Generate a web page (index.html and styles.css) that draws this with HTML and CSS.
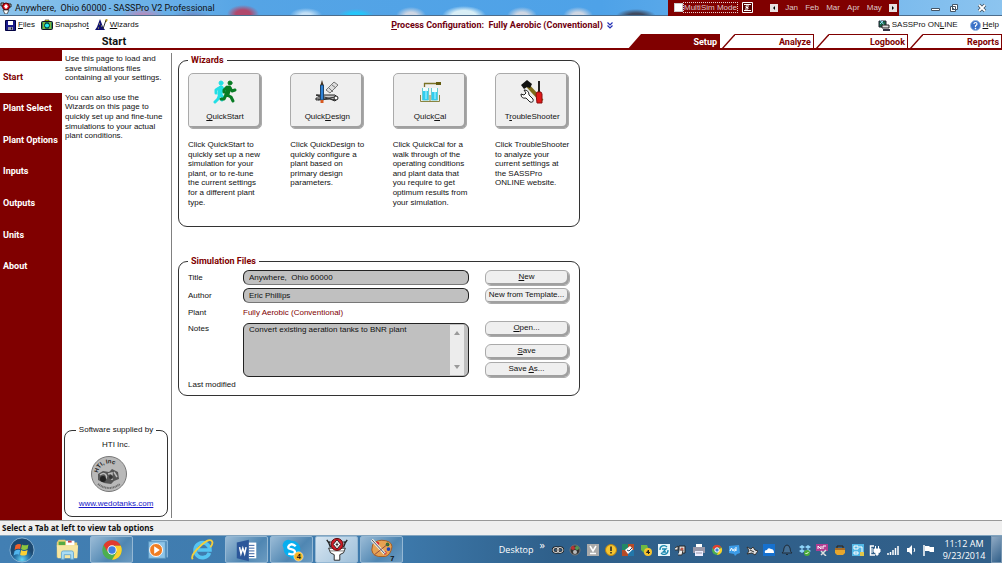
FILE: index.html
```
<!DOCTYPE html>
<html lang="en">
<head>
<meta charset="utf-8">
<title>Anywhere, Ohio 60000 - SASSPro V2 Professional</title>
<link rel="stylesheet" href="styles.css">
</head>
<body>
<div class="desktop">
  <header class="titlebar">
    <svg class="app-icon" viewBox="0 0 12 12"><path d="M1 1h3v3H1zM8 2h3v3H8z" fill="#ccc" stroke="#222"/><circle cx="6" cy="4.500" r="3.500" fill="#e01020" stroke="#500"/><path d="M6 2l2 2.500L6 7 4 4.500z" fill="#fff"/><path d="M3 8h6l-2 4H5z" fill="#fff" stroke="#222" stroke-width=".7"/></svg>
    <h1 class="window-title">Anywhere,&nbsp; Ohio 60000 - SASSPro V2 Professional</h1>
    <div class="multisim">
      <label class="multisim-label"><input type="checkbox" class="multisim-check"><span class="dotted">MultiSim Mode</span></label>
      <button class="plain sheet" aria-label="Simulation list"><svg width="11" height="11" viewBox="0 0 11 11"><path d="M.5.500h10v10H.5z" fill="#500" stroke="#fff"/><path d="M2 2.500h7M2 8.500h7" stroke="#fff"/><path d="M7 4H4v1.500h2V7H3" fill="none" stroke="#fff"/></svg></button>
      <div class="months">
        <button class="step" aria-label="Previous month"><svg viewBox="0 0 8 8"><path d="M5 2L3 4l2 2z"/></svg></button>
        <button class="plain month">Jan</button><button class="plain month">Feb</button><button class="plain month">Mar</button><button class="plain month">Apr</button><button class="plain month">May</button>
        <button class="step" aria-label="Next month"><svg viewBox="0 0 8 8"><path d="M3 2l2 2-2 2z"/></svg></button>
      </div>
    </div>
    <div class="window-controls">
      <button class="plain wc" aria-label="Minimize"><svg viewBox="0 0 12 12"><path d="M2.500 6.500h8v2h-8z" fill="#fff" stroke="#456"/></svg></button>
      <button class="plain wc" aria-label="Restore"><svg viewBox="0 0 12 12"><path d="M4.500 2.500h5v5h-5zM2.500 4.500h5v5h-5z" fill="#fff" stroke="#456"/><path d="M4.500 6.500h1v1h-1z" stroke="#456"/></svg></button>
      <button class="plain wc close" aria-label="Close"><svg viewBox="0 0 12 12"><path d="M3 3l6 6M9 3l-6 6" stroke="#456" stroke-width="3.500"/><path d="M3 3l6 6M9 3l-6 6" stroke="#fff" stroke-width="1.800"/></svg></button>
    </div>
  </header>

  <div class="toolbar">
    <div class="tools">
      <button class="plain tool"><svg class="i11" viewBox="0 0 11 11"><path d="M.5.500h10v10h-10z" fill="#1a1a8c" stroke="#000040"/><path d="M3 1h5v4H3z" fill="#fff"/><path d="M3 7h5v3H3z" fill="#99a"/><path d="M6 7.500h1v2H6z" fill="#113"/></svg><span><u>F</u>iles</span></button>
      <button class="plain tool"><svg class="i12" viewBox="0 0 12 12"><path d="M4 1h4v2H4z" fill="#dd0" stroke="#222" stroke-width=".6"/><rect x=".5" y="2.500" width="11" height="8" rx="1" fill="#2a8a55" stroke="#112"/><path d="M3 3v7M9 3v7" stroke="#dd2"/><circle cx="6" cy="6.500" r="2.500" fill="#2ee" stroke="#033"/></svg><span>Snapsho<u>t</u></span></button>
      <button class="plain tool"><svg class="i13" viewBox="0 0 13 12"><path d="M5 0l3 8 2 3H0l2-3z" fill="#101070"/><path d="M4 5h1M6 7h1M3 9h1" stroke="#cc4"/><path d="M8 10l3-9" stroke="#333"/><path d="M10 1h3M11.500 0v3" stroke="#a80" stroke-width=".7"/></svg><span><u>W</u>izards</span></button>
    </div>
    <button class="plain process"><span><u>P</u>rocess Configuration:&nbsp; Fully Aerobic (Conventional)</span><svg width="6" height="7" viewBox="0 0 6 7"><path d="M.5.500L3 3 5.500.500M.5 3.500L3 6l2.500-2.500" fill="none" stroke="#2330b5" stroke-width="1.200"/></svg></button>
    <div class="tools tools-right">
      <a class="tool" href="#online"><svg class="i12" viewBox="0 0 12 12"><path d="M1 2h7v6H1z" fill="#176b46" stroke="#223"/><path d="M2 1l4 5M5 2l-3 3" stroke="#9df"/><path d="M4 6h7v3H4z" fill="#ddd" stroke="#222"/><path d="M5 11h7" stroke="#334" stroke-width="2"/></svg><span>SASSPro ON<u>L</u>INE</span></a>
      <button class="plain tool"><svg class="i11" viewBox="0 0 11 11"><circle cx="5.500" cy="5.500" r="5" fill="#3b72c8" stroke="#9ab8e0"/><path d="M4 4q0-1.500 1.500-1.500T7 4q0 .8-1.500 1.800V7" fill="none" stroke="#fff" stroke-width="1.200"/><circle cx="5.500" cy="8.600" r=".8" fill="#fff"/></svg><span><u>H</u>elp</span></button>
    </div>
  </div>

  <nav class="tabrow" aria-label="Sections">
    <h2 class="page-title">Start</h2>
    <div class="tabs">
      <button class="plain tab active"><svg class="slant" viewBox="0 0 14 16"><path d="M0 16L14 0v16z" fill="#800000"/></svg><span class="tab-label">Setup</span></button>
      <button class="plain tab"><svg class="slant" viewBox="0 0 14 16"><path d="M0 16L14 .5" fill="none" stroke="#800000" stroke-width="1.500"/></svg><span class="tab-label">Analyze</span></button>
      <button class="plain tab"><svg class="slant" viewBox="0 0 14 16"><path d="M0 16L14 .5" fill="none" stroke="#800000" stroke-width="1.500"/></svg><span class="tab-label">Logbook</span></button>
      <button class="plain tab"><svg class="slant" viewBox="0 0 14 16"><path d="M0 16L14 .5" fill="none" stroke="#800000" stroke-width="1.500"/></svg><span class="tab-label">Reports</span></button>
    </div>
  </nav>

  <div class="body">
    <nav class="sidebar" aria-label="Setup pages">
      <div class="side-list">
        <button class="plain side active">Start</button>
        <button class="plain side">Plant Select</button>
        <button class="plain side">Plant Options</button>
        <button class="plain side">Inputs</button>
        <button class="plain side">Outputs</button>
        <button class="plain side">Units</button>
        <button class="plain side">About</button>
      </div>
    </nav>

    <aside class="info">
      <div class="help">
        <p>Use this page to load and<br>save simulations files<br>containing all your settings.</p>
        <p>You can also use the<br>Wizards on this page to<br>quickly set up and fine-tune<br>simulations to your actual<br>plant conditions.</p>
      </div>
      <fieldset class="supplier">
        <legend>Software supplied by</legend>
        <p>HTI Inc.</p>
        <svg class="hti" viewBox="0 0 38 38"><circle cx="19" cy="19" r="17.500" fill="#b9b9b9" stroke="#777"/><path id="arc" d="M8 18a11.500 11.500 0 0 1 22.500-1" fill="none"/><text class="hti-text"><textPath href="#arc">HTI, Inc</textPath></text><path d="M8 19l5-3 6 1 3-3 6 3 1 7-5 2-3 3-7-1-6-3z" fill="#555"/><path d="M10 20q4-3 6 0t-3 5M18 19l4-1v7M24 17l3 5" fill="none" stroke="#bbb" stroke-width="1.500"/><circle cx="13" cy="24" r="3" fill="#222"/><circle cx="21" cy="22" r="2" fill="#333"/><path d="M8 29q11 8 22 0" fill="none" stroke="#666" stroke-dasharray="1 .6" stroke-width="2"/></svg>
        <a class="link" href="#wedotanks">www.wedotanks.com</a>
      </fieldset>
    </aside>

    <main class="main">
      <fieldset class="group wizards">
        <legend>Wizards</legend>
        <div class="wizard-grid">
          <section class="wizard">
            <button class="raised big"><svg viewBox="0 0 24 24"><g stroke-linecap="round" stroke-linejoin="round" fill="none"><g stroke="#22dfe5"><circle cx="8" cy="3" r="2" fill="#22dfe5"/><path d="M8 8l-1 6" stroke-width="5"/><path d="M8 7l4 4M6 8l-3 2v3M7 14l3 3-1 3M7 14l-2 5-3 3" stroke-width="3"/></g><g stroke="#087c24"><circle cx="17" cy="3" r="2" fill="#087c24"/><path d="M16 8l-2 6" stroke-width="5"/><path d="M17 8l2 3 3-1M14 7l-3 3v2M14 15l4 2 2 4M13 15l-2 4H8" stroke-width="3"/></g></g></svg><span><u>Q</u>uickStart</span></button>
            <p>Click QuickStart to<br>quickly set up a new<br>simulation for your<br>plant, or to re-tune<br>the current settings<br>for a different plant<br>type.</p>
          </section>
          <section class="wizard">
            <button class="raised big"><svg viewBox="0 0 24 24"><path d="M11 10L19 2l4 3-8 8z" fill="#ddd" stroke="#777"/><path d="M14 8l4 4M17 5l4 3" stroke="#777"/><path d="M1 15h19l3 3-3 3-5-2-14 1v-2h6z" fill="#ccc" stroke="#222"/><path d="M2 15l18 5M3 20l17-3" stroke="#333"/><circle cx="21" cy="18" r="2" fill="#fff" stroke="#222"/><path d="M5.500 5h3v15h-3z" fill="#2f83d8" stroke="#246"/><path d="M5.500 5L7 0l1.500 5z" fill="#432"/><path d="M5.500 20h3v3h-3z" fill="#d85a20"/></svg><span>Quick<u>D</u>esign</span></button>
            <p>Click QuickDesign to<br>quickly configure a<br>plant based on<br>primary design<br>parameters.</p>
          </section>
          <section class="wizard">
            <button class="raised big"><svg viewBox="0 0 24 24"><path d="M6 3.500h13M6.500 3v4" stroke="#7a7226" stroke-width="1.300"/><path d="M18 2h5v3h-5z" fill="#645c10"/><path d="M4.500 8v12h6V8M13.500 8v12h6V8" fill="#eff" stroke="#6cc"/><path d="M5 11h5v9H5zM14 12h5v8h-5z" fill="#30cdf0"/><path d="M2.500 15v6.500h19V15M12 15v6" fill="none" stroke="#8a8440"/><path d="M8 10v9M17 12v7" stroke="#b8f6ff"/></svg><span>Quick<u>C</u>al</span></button>
            <p>Click QuickCal for a<br>walk through of the<br>operating conditions<br>and plant data that<br>you require to get<br>optimum results from<br>your simulation.</p>
          </section>
          <section class="wizard">
            <button class="raised big"><svg viewBox="0 0 24 24"><path d="M8 6l14 15" stroke="#7d6a18" stroke-width="4"/><path d="M1 5l6-5 5 4-2 4-3-1-3 2z" fill="#111"/><path d="M19 1v11" stroke="#222" stroke-width="2"/><path d="M16 14l1-2h4l1 2v9h-5z" fill="#e01818" stroke="#811"/><path d="M1 14l3 1 2-2-2-3q5 0 5 5l4 4q1 4-3 3l-4-4q-5 1-5-4z" fill="#fff" stroke="#222"/></svg><span>T<u>r</u>oubleShooter</span></button>
            <p>Click TroubleShooter<br>to analyze your<br>current settings at<br>the SASSPro<br>ONLINE website.</p>
          </section>
        </div>
      </fieldset>

      <fieldset class="group files">
        <legend>Simulation Files</legend>
        <div class="files-layout">
          <div class="form">
            <label for="title">Title</label>
            <input id="title" class="field" value="Anywhere,  Ohio 60000">
            <label for="author">Author</label>
            <input id="author" class="field" value="Eric Phillips">
            <span>Plant</span>
            <span class="plant">Fully Aerobic (Conventional)</span>
            <label for="notes" class="notes-label">Notes</label>
            <div class="notes">
              <textarea id="notes">Convert existing aeration tanks to BNR plant</textarea>
              <div class="scroll"><svg viewBox="0 0 6 4"><path d="M0 4l3-4 3 4z"/></svg><svg viewBox="0 0 6 4"><path d="M0 0l3 4 3-4z"/></svg></div>
            </div>
            <span class="modified">Last modified</span>
          </div>
          <div class="actions">
            <button class="raised small"><span><u>N</u>ew</span></button>
            <button class="raised small">New from Template...</button>
            <button class="raised small open"><span><u>O</u>pen...</span></button>
            <button class="raised small save"><span><u>S</u>ave</span></button>
            <button class="raised small"><span>Save <u>A</u>s...</span></button>
          </div>
        </div>
      </fieldset>
    </main>
  </div>

  <div class="status">Select a Tab at left to view tab options</div>

  <footer class="taskbar">
    <div class="apps">
      <button class="plain app" aria-label="Start menu"><svg viewBox="0 0 28 28"><defs><radialGradient id="orb" cx=".5" cy=".9"><stop offset="0" stop-color="#65d5f5"/><stop offset=".6" stop-color="#2773a8"/><stop offset="1" stop-color="#1c4870"/></radialGradient></defs><circle cx="14" cy="14" r="13" fill="url(#orb)" stroke="#8ab6d5"/><path d="M7 9q3-2 6-1l-1 5q-3-1-6 1z" fill="#f0602a"/><path d="M14 8q3 2 7 0l-1 5q-4 2-7 0z" fill="#8cc63e"/><path d="M6 15q3-2 6-1l-1 5q-3-1-6 1z" fill="#52b4ec"/><path d="M13 14q3 2 7 0l-1 5q-4 2-7 0z" fill="#fbd034"/></svg></button>
      <button class="plain app" aria-label="File Explorer"><svg viewBox="0 0 28 28"><path d="M3 6l2-3h7l2 3h11v16H3z" fill="#e9cf76"/><path d="M5 5h7v4H5z" fill="#5a4"/><path d="M13 4h9v5h-9z" fill="#fff"/><path d="M15 4h4v2h-4z" fill="#c44"/><path d="M3 9h23l-1 14H4z" fill="#f6e6a2"/><path d="M8 24v-7q0-2 2-2h9q2 0 2 2v7h-3v-5h-7v5z" fill="#a9dcf4" stroke="#68a9cf"/></svg></button>
      <button class="plain app framed" aria-label="Chrome"><svg viewBox="0 0 28 28"><circle cx="14" cy="14" r="10.500" fill="#4caf50"/><path d="M5 8.500a10.500 10.500 0 0 1 18.500 1H14l-5 6z" fill="#e23b2e"/><path d="M23.500 9.500A10.500 10.500 0 0 1 14 24.500l5-8-2-7z" fill="#fbd02d"/><circle cx="14" cy="14" r="5" fill="#fff"/><circle cx="14" cy="14" r="4" fill="#3f7fe0"/></svg></button>
      <button class="plain app" aria-label="Media Player"><svg viewBox="0 0 28 28"><path d="M5 5h18v18H5z" fill="#8cc4e8" stroke="#5794be"/><path d="M8 4h17v18" fill="none" stroke="#a8d3ee"/><circle cx="13" cy="14" r="7" fill="#ef7d23" stroke="#fff"/><path d="M11 10l6 4-6 4z" fill="#fff"/></svg></button>
      <button class="plain app" aria-label="Internet Explorer"><svg viewBox="0 0 28 28"><path d="M22 17a8 8 0 1 1 .5-3H9" fill="none" stroke="#55c5f3" stroke-width="4"/><path d="M4 24Q1 20 12 10T25 5q1 2-2 6" fill="none" stroke="#f5cf3b" stroke-width="2"/></svg></button>
      <button class="plain app framed" aria-label="Word"><svg viewBox="0 0 28 28"><path d="M13 6h11v17H13z" fill="#fff"/><path d="M16 9h6M16 12h6M16 15h6M16 18h6M16 21h6" stroke="#2b579a"/><path d="M3 6l13-3v23L3 23z" fill="#2b579a"/><path d="M6 11l1.500 7L9.500 12l2 6L13 11" fill="none" stroke="#fff" stroke-width="1.600"/></svg></button>
      <button class="plain app framed" aria-label="Skype"><svg viewBox="0 0 28 28"><circle cx="10" cy="9" r="6" fill="#08aeef"/><circle cx="17" cy="18" r="6" fill="#08aeef"/><circle cx="14" cy="13" r="9" fill="#08aeef"/><path d="M18 10q-4-4-7-1t2 4 4 4-7 1" fill="none" stroke="#fff" stroke-width="2.500"/><circle cx="21" cy="21" r="5" fill="#f5b82c" stroke="#fff" stroke-width=".5"/><text x="19" y="24" class="badge">4</text></svg></button>
      <button class="plain app framed bright" aria-label="SASSPro"><svg viewBox="0 0 28 28"><path d="M5 12h18l-2 5-4 2v6h-6v-6l-4-2z" fill="#fff" stroke="#222"/><path d="M6 15h16" stroke="#777"/><circle cx="14" cy="8" r="6.500" fill="#d21b27" stroke="#500"/><path d="M14 3l4 5-4 5-4-5z" fill="#fff" stroke="#222"/><path d="M14 6v4M12.500 8h3" stroke="#222"/><path d="M3 3l2 3 2-1M5 6l2 5M25 3l-2 3-2-1M23 6l-2 5" fill="none" stroke="#222" stroke-width="1.500"/></svg></button>
      <button class="plain app framed" aria-label="Paint"><svg viewBox="0 0 28 28"><path d="M4 8q5-6 14-4t6 10-9 7Q4 22 3 14z" fill="#e6a253" stroke="#a55a20"/><circle cx="9" cy="7" r="2" fill="#d23"/><circle cx="20" cy="8" r="2" fill="#273"/><circle cx="21" cy="13" r="2" fill="#24b"/><circle cx="17" cy="17" r="2" fill="#d33"/><path d="M3 3l14 15" stroke="#eed" stroke-width="3"/><path d="M3 3l14 15" stroke="#446"/><path d="M6 19l15-12" stroke="#844"/><text x="23" y="26" class="badge">7</text></svg></button>
    </div>
    <div class="desk"><span>Desktop</span><span class="chev">»</span></div>
    <div class="tray">
      <svg viewBox="0 0 12 12"><ellipse cx="4" cy="6" rx="3" ry="2.500" fill="none" stroke="#222" stroke-width="2.500"/><ellipse cx="8" cy="6" rx="3" ry="2.500" fill="none" stroke="#222" stroke-width="2.500"/><ellipse cx="4" cy="6" rx="3" ry="2.500" fill="none" stroke="#ddd"/><ellipse cx="8" cy="6" rx="3" ry="2.500" fill="none" stroke="#ddd"/></svg>
      <svg viewBox="0 0 12 12"><circle cx="6" cy="6" r="5" fill="#333" stroke="#777"/><circle cx="4" cy="4" r="2" fill="#b33"/><circle cx="8" cy="4" r="2" fill="#595"/><circle cx="6" cy="8" r="2" fill="#bbb"/></svg>
      <svg viewBox="0 0 12 12"><path d="M0 0h12v12H0z" fill="#aaa"/><path d="M3 2l3 5 3-5M3 9.500h6" fill="none" stroke="#fff" stroke-width="1.500"/></svg>
      <svg viewBox="0 0 12 12"><circle cx="6" cy="6" r="5.500" fill="#f6c52f" stroke="#b98213"/><path d="M6 2.500v4.500M6 8v1.500" stroke="#222" stroke-width="1.500"/></svg>
      <svg viewBox="0 0 12 12"><path d="M0 0h12v12H0z" fill="#b54b27"/><path d="M0 0h6v6H0z" fill="#286"/><path d="M6 6h6v6H6z" fill="#27a"/><path d="M3 6l5-4 3 3-5 5z" fill="#fff"/><path d="M5 6l2 1 3-3" fill="none" stroke="#246"/></svg>
      <svg viewBox="0 0 12 12"><path d="M1 1h6l2 5-4 4-4-4z" fill="#6eb943"/><circle cx="8" cy="8" r="4" fill="#f7c42e"/><path d="M8.500 10V6L6.500 8.500H10" fill="none" stroke="#222"/></svg>
      <svg viewBox="0 0 12 12"><path d="M0 0h12v12H0z" fill="#e8f6fb"/><path d="M2 6a4 4 0 0 1 7-3M10 6a4 4 0 0 1-7 3M4 5h4L5 8h3" fill="none" stroke="#1887ae" stroke-width="1.300"/></svg>
      <svg viewBox="0 0 12 12"><path d="M4 2h6v7H4z" fill="#ddd" stroke="#222"/><path d="M0 4l3-2v4H0M5 6h3l-1 5H3" fill="#eee" stroke="#333"/><circle cx="7" cy="5" r="1.500" fill="#b54"/></svg>
      <svg viewBox="0 0 12 12"><path d="M3 0h6v4H3z" fill="#fff"/><path d="M0 3h12v6H0z" fill="#99a"/><path d="M2 7h8v5H2z" fill="#eef"/><path d="M3 9h6" stroke="#99a"/></svg>
      <svg viewBox="0 0 12 12"><circle cx="6" cy="6" r="5" fill="#4caf50"/><path d="M1.500 3.500a5 5 0 0 1 9 0H6L4 7z" fill="#e23b2e"/><path d="M10.500 3.500A5 5 0 0 1 6 11l2-5z" fill="#fbd02d"/><circle cx="6" cy="6" r="2.200" fill="#3f7fe0" stroke="#fff"/></svg>
      <svg viewBox="0 0 12 12"><path d="M1 2l10-1 1 8-3 1-2 2-1-2-5-1z" fill="#3c9ce8"/><path d="M2 7l1.500-3L5 7M8 3v4" fill="none" stroke="#fff"/><circle cx="6.500" cy="6" r="1" fill="none" stroke="#fff"/></svg>
      <svg viewBox="0 0 12 12"><path d="M1 3l4 2 2-2 2 3 3 1-3 4-3-2-5 1 2-3z" fill="#ddd" stroke="#333"/><path d="M4 6l4 2" stroke="#333"/></svg>
      <svg viewBox="0 0 12 12"><path d="M0 0h12v12H0z" fill="#1671cf"/><path d="M2 9q-1-3 2-3 1-3 4-1 3 0 3 4z" fill="#fff"/></svg>
      <svg viewBox="0 0 12 12"><path d="M1 9q2-1 2-5 1-3 3-3t3 3q0 4 2 5zM5 10.500h2" fill="#456f94" stroke="#202c38"/></svg>
      <svg viewBox="0 0 12 12"><path d="M3 1l3 2-3 2-3-2zM9 1l3 2-3 2-3-2zM3 5l3 2-3 2-3-2zM9 5l3 2-3 2-3-2z" fill="#8fd4fa"/><circle cx="8" cy="9" r="3" fill="#4bac38"/><path d="M6.500 9l1 1 2-2" fill="none" stroke="#fff"/></svg>
      <svg viewBox="0 0 12 12"><path d="M0 0h12v7H0z" fill="#b13d91"/><path d="M2 5V2l3 3V2M7 5V2h3" fill="none" stroke="#fff"/><path d="M5 7l5 5M10 6l-5 5" stroke="#ddd" stroke-width="1.500"/></svg>
      <svg viewBox="0 0 12 12"><path d="M1 4h10v5l-2 2H3l-2-2z" fill="#e6a62d"/><path d="M3 4V2h6v2" fill="none" stroke="#321"/><path d="M1 5h10" stroke="#632"/></svg>
      <svg viewBox="0 0 12 12"><path d="M0 0h12v12H0z" fill="#52b7e5"/><path d="M2 2h4v3H2zM7 3h3v5M2 8h4v2H2z" fill="none" stroke="#fff"/><path d="M8 8h4v4H8z" fill="#e3c84b"/></svg>
      <svg viewBox="0 0 12 12"><path d="M5 2H1.500v9H6" fill="none" stroke="#fff" stroke-width="1.500"/><path d="M3 4v5" stroke="#fff"/><path d="M5 5h6v3L9 9v2H7V9L5 8zM6.500 2v3M9.500 2v3" fill="#fff" stroke="#fff"/></svg>
      <svg viewBox="0 0 12 12"><path d="M1 11V9M3.500 11V8M6 11V6M8.500 11V4M11 11V2" stroke="#fff" stroke-width="1.500"/></svg>
      <svg viewBox="0 0 12 12"><path d="M2 4h2l3-3v10L4 8H2z" fill="#fff"/><path d="M9 4q1.500 2 0 4" fill="none" stroke="#fff"/></svg>
      <svg viewBox="0 0 12 12"><path d="M2 1v11" stroke="#fff" stroke-width="1.500"/><path d="M3 2h4l1 1h4v5H8L7 7H3z" fill="#fff"/></svg>
    </div>
    <div class="clock"><span>11:12 AM</span><span>9/23/2014</span></div>
    <button class="plain show-desktop" aria-label="Show desktop"></button>
  </footer>
</div>
</body>
</html>
```
FILE: styles.css
```
* { box-sizing: border-box; }
body { margin: 0; background: #fff; color: #111; font: 8px/1.2 "Liberation Sans", Arial, sans-serif; }
p, h1, h2 { margin: 0; font-size: inherit; }
svg { display: block; flex: none; }
.plain { border: 0; padding: 0; margin: 0; background: none; color: inherit; font: inherit; }
.desktop { display: flex; flex-direction: column; min-height: 100vh; }

/* Title bar */
.titlebar {
  display: flex; align-items: center; height: 16px; border-bottom: 1px solid #4d6d8c;
  background:
    radial-gradient(ellipse 22px 7px at 143px 15px, #b08fc0 20%, transparent),
    radial-gradient(ellipse 20px 6px at 90px 16px, #8a9fd8 20%, transparent),
    radial-gradient(ellipse 20px 6px at 192px 16px, #6a8cc8 20%, transparent),
    radial-gradient(ellipse 16px 9px at 243px 14px, #b0486c 45%, transparent),
    radial-gradient(ellipse 16px 7px at 306px 15px, #c4e0f6 30%, transparent),
    radial-gradient(ellipse 18px 6px at 356px 15px, #25c6fa 40%, transparent),
    radial-gradient(ellipse 15px 9px at 411px 16px, #cfd6e2 40%, transparent),
    radial-gradient(ellipse 22px 10px at 464px 16px, #d8eef6 55%, transparent),
    radial-gradient(ellipse 15px 9px at 522px 16px, #cfd6e2 40%, transparent),
    radial-gradient(ellipse 15px 9px at 578px 16px, #cfd6e2 40%, transparent),
    radial-gradient(ellipse 20px 7px at 636px 16px, #404a60 40%, transparent),
    linear-gradient(90deg, #8cc4ec, #55a4e5 25%, #4ea2e8 60%, #8cc4ef);
}
.app-icon { width: 12px; height: 12px; }
.window-title { margin-left: 3px; flex: 1; font: 9px/14px Roboto, sans-serif; white-space: nowrap; }
.multisim { display: flex; align-items: center; justify-content: space-between; width: 231px; height: 16px; padding: 0 2px 0 6px; background: #800000; color: #ddc8c8; }
.multisim-label { display: flex; align-items: center; font-size: 8px; }
.multisim-check { appearance: none; width: 9px; height: 9px; margin: 0; background: #fff; border: 1px solid #ccc; }
.dotted { border: 1px dotted #e8d0d0; line-height: 9px; }
.sheet { margin-right: 12px; }
.months { display: flex; align-items: center; width: 127px; justify-content: space-between; }
.step { width: 8px; height: 8px; padding: 0; border: 0; background: #e8e0e0; }
.step svg { width: 8px; height: 8px; }
.window-controls { display: flex; align-items: center; justify-content: flex-end; gap: 7px; width: 103px; padding-right: 14px; }
.wc { width: 12px; height: 12px; }
.close { margin-left: 9px; }

/* Toolbar */
.toolbar { display: grid; grid-template-columns: 1fr auto 1fr; align-items: center; height: 18px; padding: 0 3px 0 5px; }
.tools { display: flex; gap: 6px; }
.tools-right { justify-content: flex-end; gap: 12px; }
.tool { display: flex; align-items: center; gap: 2px; color: #111; text-decoration: none; white-space: nowrap; }
.i11 { width: 11px; height: 11px; }
.i12 { width: 12px; height: 12px; }
.i13 { width: 13px; height: 12px; }
.process { display: flex; align-items: center; gap: 4px; color: #700010; font: bold 9px/12px Roboto, sans-serif; }

/* Section tabs */
.tabrow { display: flex; justify-content: space-between; height: 16px; border-bottom: 2px solid #800000; }
.page-title { width: 228px; text-align: center; font: bold 11px/15px Roboto, sans-serif; }
.tabs { display: flex; gap: 1px; }
.tab { display: flex; width: 93px; height: 16px; color: #800000; font: bold 9px/15px Roboto, sans-serif; }
.slant { width: 14px; height: 16px; }
.tab-label { flex: 1; height: 16px; padding-right: 2px; border-top: 1px solid #800000; border-right: 1px solid #800000; text-align: right; }
.active .tab-label { background: #800000; color: #fff; }

/* Work area */
.body { display: flex; flex: 1; }
.sidebar { width: 62px; padding-top: 11px; background: #800000; flex: none; }
.side-list { display: grid; grid-template-rows: repeat(7, 1fr); height: 221px; }
.side { padding-left: 3px; color: #fff; font: bold 9px/12px Roboto, sans-serif; text-align: left; white-space: nowrap; }
.side.active { background: #fff; color: #800000; }
.info { display: flex; flex-direction: column; justify-content: space-between; width: 110px; margin: 3px 0 2px; padding: 1px 3px 1px 2px; border-right: 1px solid #808080; flex: none; }
.help { display: grid; gap: 10px; padding-left: 1px; white-space: nowrap; }
.supplier { display: flex; flex-direction: column; align-items: center; gap: 6px; min-width: 0; margin: 0; padding: 5px 0 7px; border: 1px solid #333; border-radius: 8px; }
.supplier legend { margin: 0 auto; padding: 0 3px; }
.hti { width: 38px; height: 38px; margin-right: 14px; }
.hti-text { font: bold 6px "Liberation Sans", sans-serif; fill: #222; }
.link { color: #1616c8; }
.main { flex: 1; padding: 5px 6px; }

/* Group boxes */
.group { width: 402px; margin: 0; padding: 8px 9px 0; border: 1px solid #333; border-radius: 9px; }
.group legend { margin-left: 0; padding: 0 3px; color: #800000; font: bold 9px/10px Roboto, sans-serif; }
.wizards { min-height: 172px; }
.wizard-grid { display: grid; grid-template-columns: repeat(4, 74px); justify-content: space-between; padding-right: 1px; }
.wizard { display: grid; gap: 11px; align-content: start; white-space: nowrap; }
.raised { margin: 0; border: 1px solid #aaa; background: #efefef; box-shadow: inset -2px -2px 0 #a0a0a0; color: #111; font: inherit; }
.big { display: flex; flex-direction: column; align-items: center; justify-content: space-between; height: 56px; padding: 6px 0 6px; border-radius: 5px; }
.big svg { width: 24px; height: 24px; }
.files { margin-top: 29px; padding-top: 4px; }
.files-layout { display: flex; justify-content: space-between; }
.form { display: grid; grid-template-columns: 55px 226px; grid-template-rows: 15px 15px auto 54px auto; row-gap: 3px; align-items: center; padding-bottom: 6px; }
.field { width: 100%; height: 15px; padding: 0 5px; border: 1px solid #222; border-bottom-color: #777; border-radius: 6px; background: #c0c0c0; color: #111; font: inherit; }
.plant { padding: 2px 0; color: #800000; }
.notes-label { align-self: start; padding-top: 1px; }
.notes { display: flex; height: 54px; padding: 1px 4px 1px 5px; border: 1px solid #222; border-radius: 6px; background: #c0c0c0; }
.notes textarea { flex: 1; padding: 0; border: 0; background: none; color: #111; font: inherit; resize: none; overflow: hidden; }
.scroll { display: flex; flex-direction: column; align-items: center; justify-content: space-between; width: 14px; padding: 6px 0; background: #ececec; }
.scroll svg { width: 6px; height: 4px; fill: #999; }
.modified { grid-column: 1 / -1; }
.actions { display: flex; flex-direction: column; gap: 2px; width: 85px; }
.small { height: 16px; padding: 0 2px 2px 0; border-radius: 6px; white-space: nowrap; }
.open { margin-top: 15px; }
.save { margin-top: 5px; }

/* Status line and taskbar */
.status { height: 15px; padding-left: 2px; border-top: 1px solid #999; background: #efefef; font: bold 8px/14px "Noto Sans", sans-serif; }
.taskbar { display: flex; align-items: center; height: 28px; border-top: 1px solid #82a4bf; background: linear-gradient(90deg, #427fb3, #3d79ab 40%, #2f608b 55%, #315f89); color: #fff; }
.apps { display: flex; gap: 2px; }
.app { display: flex; align-items: center; justify-content: center; width: 43px; height: 27px; }
.app svg { width: 26px; height: 26px; }
.framed { border: 1px solid #95b8d4; border-radius: 2px; background: linear-gradient(135deg, #9abbd6, #4f86b2 60%, #6b9bc1); }
.bright { background: linear-gradient(135deg, #d6e5f1, #9fc0da); }
.badge { font: bold 8px "Liberation Sans", sans-serif; fill: #111; }
.desk { display: flex; flex: 1; justify-content: flex-end; gap: 6px; padding-right: 4px; font: 9px/12px "Open Sans", sans-serif; }
.chev { align-self: start; line-height: 1px; font-size: 11px; }
.tray { display: grid; grid-template-columns: repeat(22, 1fr); width: 388px; justify-items: center; }
.tray svg { width: 12px; height: 12px; }
.clock { display: flex; flex-direction: column; align-items: center; width: 54px; font: 9px/12px "Open Sans", sans-serif; white-space: nowrap; }
.show-desktop { width: 11px; height: 27px; border: 1px solid #7796b2; background: linear-gradient(135deg, #8faac4, #315f89); }
```
